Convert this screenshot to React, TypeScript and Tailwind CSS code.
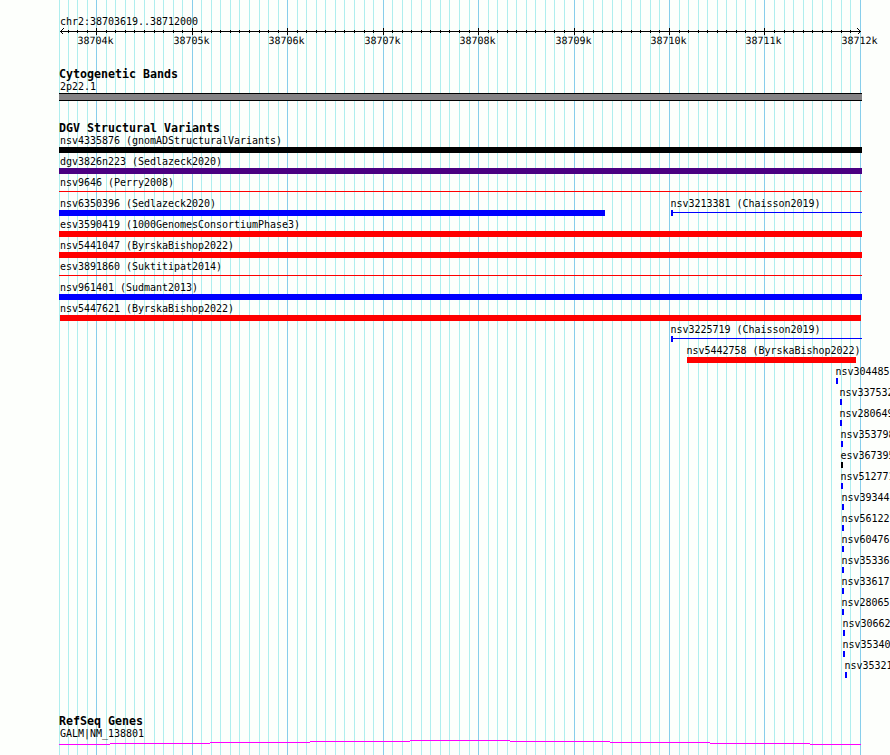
type Mark = {
  x: number
  label: string
  width?: number
  color?: string
  thin?: boolean
  tick?: boolean
}

const START = 59
const MAJOR = '#87ceeb'
const MINOR = '#afeeee'

// One grid line every 100 bp, a major one every 1000 bp
const gridLines = Array.from({ length: 85 }, (_, n) => {
  const i = n - 4
  return { x: Math.max(START, Math.floor(96.74 + i * 9.5454)), major: i % 10 === 0 }
})

const rows: Mark[][] = [
  [{ x: 59, label: 'nsv4335876 (gnomADStructuralVariants)', width: 803, color: 'bg-black' }],
  [{ x: 59, label: 'dgv3826n223 (Sedlazeck2020)', width: 803, color: 'bg-[#4b0082]' }],
  [{ x: 59, label: 'nsv9646 (Perry2008)', width: 803, color: 'bg-[#ff0000]', thin: true }],
  [
    { x: 59, label: 'nsv6350396 (Sedlazeck2020)', width: 546, color: 'bg-[#0000ff]' },
    { x: 671, label: 'nsv3213381 (Chaisson2019)', width: 191, color: 'bg-[#0000ff]', thin: true, tick: true },
  ],
  [{ x: 59, label: 'esv3590419 (1000GenomesConsortiumPhase3)', width: 803, color: 'bg-[#ff0000]' }],
  [{ x: 59, label: 'nsv5441047 (ByrskaBishop2022)', width: 803, color: 'bg-[#ff0000]' }],
  [{ x: 59, label: 'esv3891860 (Suktitipat2014)', width: 803, color: 'bg-[#ff0000]', thin: true }],
  [{ x: 59, label: 'nsv961401 (Sudmant2013)', width: 803, color: 'bg-[#0000ff]' }],
  [{ x: 60, label: 'nsv5447621 (ByrskaBishop2022)', width: 801, color: 'bg-[#ff0000]' }],
  [{ x: 671, label: 'nsv3225719 (Chaisson2019)', width: 191, color: 'bg-[#0000ff]', thin: true, tick: true }],
  [{ x: 687, label: 'nsv5442758 (ByrskaBishop2022)', width: 169, color: 'bg-[#ff0000]' }],
  [{ x: 836, label: 'nsv304485' }],
  [{ x: 840, label: 'nsv337532' }],
  [{ x: 840, label: 'nsv280649' }],
  [{ x: 841, label: 'nsv353798' }],
  [{ x: 841, label: 'esv367395', color: 'bg-black' }],
  [{ x: 841, label: 'nsv512771' }],
  [{ x: 842, label: 'nsv39344' }],
  [{ x: 842, label: 'nsv56122' }],
  [{ x: 842, label: 'nsv60476' }],
  [{ x: 842, label: 'nsv35336' }],
  [{ x: 842, label: 'nsv33617' }],
  [{ x: 842, label: 'nsv28065' }],
  [{ x: 843, label: 'nsv30662' }],
  [{ x: 843, label: 'nsv35340' }],
  [{ x: 845, label: 'nsv35321' }],
]

function Grid() {
  return (
    <svg className="absolute inset-0" width="890" height="755" shapeRendering="crispEdges">
      {gridLines.map(l => (
        <rect key={l.x} x={l.x} y="0" width="1" height="755" fill={l.major ? MAJOR : MINOR} />
      ))}
    </svg>
  )
}

function Ruler() {
  return (
    <svg className="block" width="890" height="24" shapeRendering="crispEdges">
      <rect x="60" y="4" width="801" height="1" fill="#000" />
      {gridLines.slice(1, -1).map(l => (
        <rect key={l.x} x={l.x} y={l.major ? 1 : 3} width="1" height={l.major ? 7 : 3} fill="#000" />
      ))}
      <path d="M63.5 1.5L60.5 4.5L63.5 7.5M857.5 1.5L860.5 4.5L857.5 7.5" fill="none" stroke="#000" />
      {gridLines
        .filter(l => l.major)
        .map((l, i) => (
          <text key={l.x} x={l.x - 18.5} y="17" fontSize="10" letterSpacing="-0.02" textRendering="geometricPrecision">
            {38704 + i}k
          </text>
        ))}
    </svg>
  )
}

function Title({ children }: { children: string }) {
  return <h2 className="h-[13px] pl-[59px] text-[11.63px] leading-[13px] font-bold">{children}</h2>
}

function Label({ children }: { children: string }) {
  return <div className="h-[13px] text-[10px] leading-[13px] tracking-[-0.02px] whitespace-nowrap">{children}</div>
}

function Feature({ mark }: { mark: Mark }) {
  const color = mark.color ?? 'bg-[#0000ff]'
  // labels never start left of the panel edge
  const labelX = Math.max(START + 1, mark.x - 0.6)
  return (
    <div className="col-start-1 row-start-1">
      <div style={{ paddingLeft: labelX }}>
        <Label>{mark.label}</Label>
      </div>
      <div className="flex h-[6px]" style={{ marginLeft: mark.x, width: mark.width ?? 2 }}>
        {mark.tick && <div className={`h-[6px] w-[2px] ${color}`} />}
        <div className={`flex-1 ${mark.thin ? 'mt-[2px] h-px' : 'h-[6px]'} ${color}`} />
      </div>
    </div>
  )
}

export default function App() {
  return (
    <div className="relative h-[755px] w-[890px] overflow-hidden bg-[#fdfffc] font-['DejaVu_Sans_Mono',monospace] text-black">
      <Grid />
      <div className="relative">
        <div className="h-[27px] pt-[15px] pl-[60px]">
          <Label>chr2:38703619..38712000</Label>
        </div>
        <Ruler />

        <section className="mt-[17px]">
          <Title>Cytogenetic Bands</Title>
          <div className="-mt-px h-[13px] pl-[60px]">
            <Label>2p22.1</Label>
          </div>
          <div className="ml-[59px] h-[8px] w-[803px] border-y border-black bg-[#848284]" />
        </section>

        <section className="mt-[21px]">
          <Title>DGV Structural Variants</Title>
          <div className="-mt-px">
            {rows.map((row, i) => (
              <div key={i} className="grid h-[21px] grid-cols-1">
                {row.map(mark => (
                  <Feature key={mark.label} mark={mark} />
                ))}
              </div>
            ))}
          </div>
        </section>

        <section className="mt-[35px]">
          <Title>RefSeq Genes</Title>
          <div className="-mt-px pl-[60px]">
            <Label>GALM|NM_138801</Label>
          </div>
          <svg className="block" width="890" height="15" shapeRendering="crispEdges">
            <path
              d="M59 4.5H110M110 3.5H210M210 2.5H310M310 1.5H410M410 0.5H510M510 1.5H610M610 2.5H710M710 3.5H810M810 4.5H861"
              fill="none"
              stroke="#ff00ff"
            />
          </svg>
        </section>
      </div>
    </div>
  )
}
